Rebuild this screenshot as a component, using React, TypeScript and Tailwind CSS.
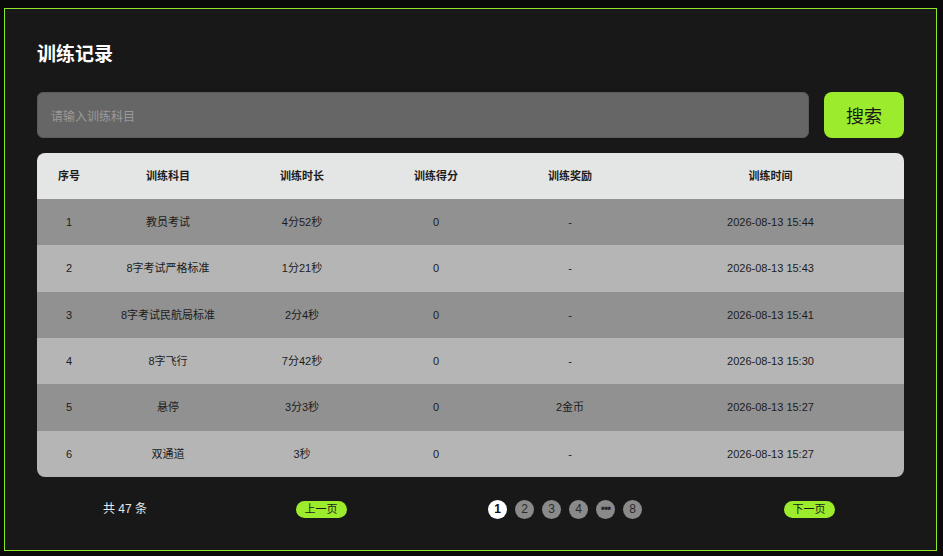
const records = [
  { id: 1, subject: "教员考试", duration: "4分52秒", score: 0, reward: "-", time: "2026-08-13 15:44" },
  { id: 2, subject: "8字考试严格标准", duration: "1分21秒", score: 0, reward: "-", time: "2026-08-13 15:43" },
  { id: 3, subject: "8字考试民航局标准", duration: "2分4秒", score: 0, reward: "-", time: "2026-08-13 15:41" },
  { id: 4, subject: "8字飞行", duration: "7分42秒", score: 0, reward: "-", time: "2026-08-13 15:30" },
  { id: 5, subject: "悬停", duration: "3分3秒", score: 0, reward: "2金币", time: "2026-08-13 15:27" },
  { id: 6, subject: "双通道", duration: "3秒", score: 0, reward: "-", time: "2026-08-13 15:27" },
];

const headers = ["序号", "训练科目", "训练时长", "训练得分", "训练奖励", "训练时间"];
const pages = ["1", "2", "3", "4", "•••", "8"];

const cols = "grid grid-cols-[64px_134px_134px_134px_134px_1fr] items-center text-center";

export default function App() {
  return (
    <div
      className="min-h-[556px] w-full bg-[#0a0a0a] pt-2 pl-1"
      style={{ fontFamily: '"Liberation Sans", "Noto Sans CJK SC", sans-serif' }}
    >
      <div className="flex h-[543px] w-[933px] flex-col border border-[#8ee62a] bg-[#181818] px-8 pt-[32px]">
        <h1 className="h-7 text-[19px] font-bold leading-7 text-white">训练记录</h1>

        <div className="mt-[23px] flex h-[46px] gap-[15px]">
          <input
            placeholder="请输入训练科目"
            className="h-full flex-1 rounded-md border border-[#5a5a5a] bg-[#666666] px-[13px] pt-1 text-[12px] text-white outline-none placeholder:text-[#9a9a9a]"
          />
          <button className="h-full w-[80px] rounded-lg bg-[#9ceb2c] pt-1 text-[18px] text-[#1a1a1a]">搜索</button>
        </div>

        <div className="mt-[15px] overflow-hidden rounded-lg text-[11px] text-[#1c1c1c]">
          <div className={`${cols} h-[46px] bg-[#e4e5e5] font-bold`}>
            {headers.map((h) => (
              <div key={h}>{h}</div>
            ))}
          </div>
          <div className="grid h-[278px] grid-rows-6">
            {records.map((r, i) => (
              <div key={r.id} className={`${cols} ${i % 2 === 0 ? "bg-[#919191]" : "bg-[#b5b5b5]"}`}>
                <div>{r.id}</div>
                <div>{r.subject}</div>
                <div>{r.duration}</div>
                <div>{r.score}</div>
                <div>{r.reward}</div>
                <div>{r.time}</div>
              </div>
            ))}
          </div>
        </div>

        <div className="mt-[22px] grid h-5 grid-cols-[176px_216px_272px_216px] items-center justify-items-center">
          <span className="text-[12px] text-[#e8e8e8]">共 47 条</span>
          <button className="h-[17px] w-[51px] rounded-full bg-[#9ceb2c] text-[11px] leading-[17px] text-[#1a1a1a]">
            上一页
          </button>
          <div className="flex gap-2">
            {pages.map((p, i) => (
              <span
                key={p}
                className={`flex h-[19px] w-[19px] items-center justify-center rounded-full text-[12px] ${
                  i === 0 ? "bg-white font-bold text-[#111]" : "bg-[#8a8a8a] text-[#2a2a2a]"
                } ${p === "•••" ? "text-[7px] tracking-[-1px]" : ""}`}
              >
                {p}
              </span>
            ))}
          </div>
          <button className="h-[17px] w-[51px] rounded-full bg-[#9ceb2c] text-[11px] leading-[17px] text-[#1a1a1a]">
            下一页
          </button>
        </div>
      </div>
    </div>
  );
}
